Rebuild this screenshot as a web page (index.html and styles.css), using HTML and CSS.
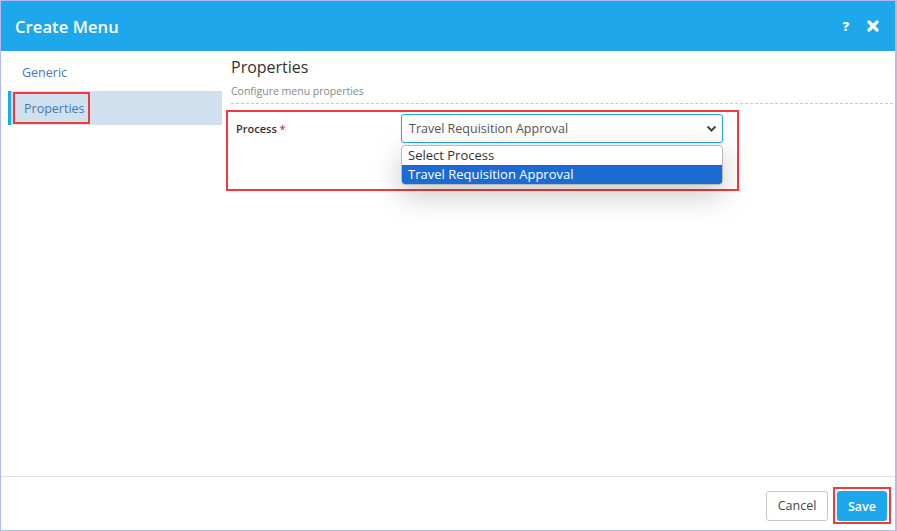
FILE: index.html
```html
<!DOCTYPE html>
<html>
<head>
<meta charset="utf-8">
<link rel="stylesheet" href="styles.css">
</head>
<body>
<div class="dialog">
  <div class="header">
    <div class="title">Create Menu</div>
    <div class="tools">
      <span class="help">?</span>
      <svg class="close" width="12" height="12" viewBox="0 0 12 12"><path d="M2 2 L10 10 M10 2 L2 10" stroke="#fff" stroke-width="3.2" stroke-linecap="round"/></svg>
    </div>
  </div>
  <div class="body">
    <div class="sidebar">
      <div class="nav-item">Generic</div>
      <div class="nav-item active"><span class="hl">Properties</span></div>
    </div>
    <div class="main">
      <div class="heading">Properties</div>
      <div class="sub">Configure menu properties</div>
      <div class="divider"></div>
      <div class="field-box">
        <div class="label">Process <span class="req">*</span></div>
        <div class="control">
          <div class="select">
            <span>Travel Requisition Approval</span>
            <svg width="11" height="8" viewBox="0 0 11 8"><path d="M1.5 1.5 L5.5 5.5 L9.5 1.5" fill="none" stroke="#444" stroke-width="2"/></svg>
          </div>
          <div class="options">
            <div class="opt">Select Process</div>
            <div class="opt sel">Travel Requisition Approval</div>
          </div>
        </div>
      </div>
    </div>
  </div>
  <div class="footer">
    <button class="btn cancel">Cancel</button>
    <span class="save-wrap"><button class="btn save">Save</button></span>
  </div>
</div>
</body>
</html>
```
FILE: styles.css
```css
* { box-sizing: border-box; }
html, body { margin: 0; padding: 0; }
body { font-family: "Open Sans", "Noto Sans", sans-serif; background: #fff; }
.dialog {
  width: 897px; height: 531px;
  border: 1px solid #b3bbf6;
  border-right-width: 2px;
  display: flex; flex-direction: column;
}
.header {
  height: 50px; background: #1fa7eb; color: #fff;
  display: flex; align-items: center; justify-content: space-between;
  padding: 0 16px 0 14px; flex: none;
}
.title { font-size: 16.5px; font-weight: 600; letter-spacing: 0.1px; }
.tools { display: flex; align-items: center; gap: 18px; }
.help { font-size: 13px; font-weight: 800; line-height: 1; }
.close { display: block; }
.body { flex: 1; display: flex; }
.sidebar { width: 221px; padding: 4px 0 0 7px; flex: none; }
.nav-item {
  height: 34px; display: flex; align-items: center;
  padding-left: 14px; font-size: 12.5px; color: #3c7bbd; margin-bottom: 2px;
}
.nav-item.active {
  background: #d1e0ee; border-left: 3px solid #1fa7eb; padding-left: 2px;
}
.hl {
  border: 2px solid #ee3b40; height: 32px; display: flex; align-items: center;
  padding: 0 3px 0 9px;
}
.main { flex: 1; padding: 5px 0 0 9px; }
.heading { font-size: 16px; color: #333; line-height: 22px; }
.sub { font-size: 10.5px; color: #888; margin-top: 6px; line-height: 15px; }
.divider { border-top: 1px dashed #c8c8c8; margin-top: 4px; margin-right: 2px; }
.field-box {
  margin: 6px 0 0 -5px; width: 513px; height: 81px;
  border: 2px solid #ee3b40; display: flex; padding: 2px 0 0 8px;
}
.label { width: 165px; font-size: 11px; font-weight: 600; color: #333; padding-top: 7px; }
.req { color: #e0343a; font-weight: 600; }
.control { width: 322px; }
.select {
  height: 29px; border: 1px solid #29a4e6; border-radius: 3px;
  display: flex; align-items: center; justify-content: space-between;
  padding: 0 5px 0 7px; font-size: 12.5px; color: #555;
  box-shadow: 0 1px 3px rgba(0,0,0,0.08);
}
.options {
  margin-top: 2px; border: 1px solid #bbb; border-radius: 4px; overflow: hidden;
  box-shadow: 0 10px 30px rgba(0,0,0,0.22);
  background: #fff;
}
.opt { height: 19px; line-height: 19px; padding-left: 6px; font-size: 13px; color: #333; }
.opt.sel { background: #1b6bd3; color: #fff; }
.footer {
  height: 54px; border-top: 1px solid #e2e2e2; flex: none;
  display: flex; justify-content: flex-end; align-items: center; gap: 5px;
  padding: 4px 4px 0 0;
}
.btn {
  font-family: inherit; font-size: 12.5px; height: 30px; border-radius: 3px; cursor: pointer;
}
.cancel { background: #fff; border: 1px solid #c8c8c8; color: #444; width: 62px; }
.save-wrap { border: 2px solid #ee3b40; padding: 2px 2px 1px; display: flex; }
.save { background: #1fa7eb; border: none; color: #fff; width: 50px; font-weight: 600; }
```
